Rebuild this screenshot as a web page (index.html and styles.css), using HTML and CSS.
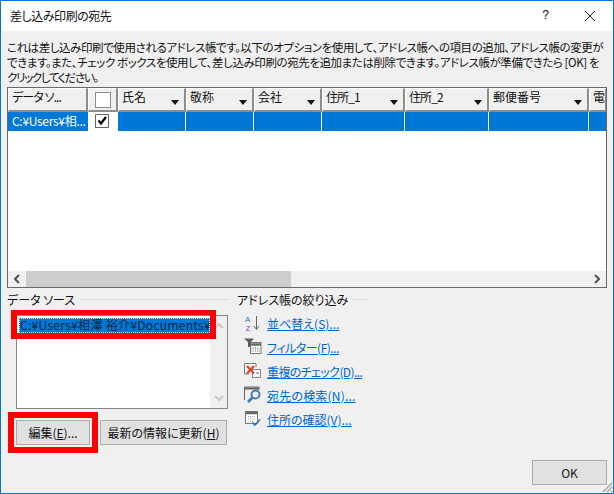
FILE: index.html
```html
<!DOCTYPE html>
<html lang="ja">
<head>
<meta charset="utf-8">
<title>差し込み印刷の宛先</title>
<link rel="stylesheet" href="styles.css">
</head>
<body>
<div class="window">
  <header class="titlebar">
    <span class="title">差し込み印刷の宛先</span>
    <span class="help">?</span>
    <svg class="close" width="12" height="12" viewBox="0 0 12 12"><path d="M1 1L11 11M11 1L1 11" stroke="#222" stroke-width="1" fill="none"/></svg>
  </header>
  <main class="content">
    <p class="intro"><span class="l1">これは差し込み印刷で使用されるアドレス帳です。以下のオプションを使用して、アドレス帳への項目の追加、アドレス帳の変更が</span><span class="l2">できます。また、チェック ボックスを使用して、差し込み印刷の宛先を追加または削除できます。アドレス帳が準備できたら [OK] を</span><span class="l3">クリックしてください。</span></p>
    <section class="table">
      <div class="row head">
        <div class="th tight">データ ソ...</div>
        <div class="th center"><span class="box"></span></div>
        <div class="th arrow">氏名</div>
        <div class="th arrow">敬称</div>
        <div class="th arrow">会社</div>
        <div class="th arrow tight">住所_1</div>
        <div class="th arrow tight">住所_2</div>
        <div class="th arrow">郵便番号</div>
        <div class="th">電</div>
      </div>
      <div class="row sel">
        <div class="td">C:¥Users¥相...</div>
        <div class="td check"><span class="box small"><svg width="11" height="11" viewBox="0 0 11 11"><path d="M1.500 4.500L4 7.500L9 1" stroke="#000" stroke-width="2.200" fill="none"/></svg></span></div>
        <div class="td line"></div><div class="td line"></div><div class="td line"></div><div class="td line"></div><div class="td line"></div><div class="td line"></div><div class="td line"></div>
      </div>
      <div class="table-space"></div>
      <div class="hscroll">
        <svg class="sarrow" width="6" height="10" viewBox="0 0 6 10"><path d="M5 1L1 5L5 9" stroke="#555" stroke-width="2" fill="none"/></svg>
        <div class="track"><div class="thumb"></div></div>
        <svg class="sarrow" width="6" height="10" viewBox="0 0 6 10"><path d="M1 1L5 5L1 9" stroke="#555" stroke-width="2" fill="none"/></svg>
      </div>
    </section>
    <section class="lower">
      <div class="source">
        <div class="group-title"><span>データ ソース</span><i></i></div>
        <div class="listbox">
          <div class="items"><div class="item"><span>C:¥Users¥相澤 裕介¥Documents¥</span></div></div>
          <div class="vscroll">
            <svg width="10" height="6" viewBox="0 0 10 6"><path d="M1 5L5 1L9 5" stroke="#c8c8c8" stroke-width="2" fill="none"/></svg>
            <svg width="10" height="6" viewBox="0 0 10 6"><path d="M1 1L5 5L9 1" stroke="#c8c8c8" stroke-width="2" fill="none"/></svg>
          </div>
          <div class="mark mark-list"></div>
        </div>
        <div class="buttons">
          <button class="btn edit">編集(<u>E</u>)...<span class="mark mark-edit"></span></button>
          <button class="btn refresh">最新の情報に更新(<u>H</u>)</button>
        </div>
      </div>
      <div class="filter">
        <div class="group-title"><span>アドレス帳の絞り込み</span><i></i></div>
        <ul class="links">
          <li><svg width="18" height="18" viewBox="0 0 18 18"><text x="1" y="8" class="az a">A</text><text x="1.500" y="17" class="az z">Z</text><path d="M12.500 2V15M10 12L12.500 15.500L15 12" stroke="#666" fill="none"/></svg><a>並べ替え(S)...</a></li>
          <li><svg width="18" height="18" viewBox="0 0 18 18"><path d="M0 0.500H10L7 4V9H4V4Z" fill="#5c5c5c"/><rect x="6.500" y="4.500" width="10.500" height="11" fill="#fff" stroke="#777"/><path d="M7 6.500H17" stroke="#666" stroke-width="2.500"/><path d="M9 9V15M11.500 9V15M14 9V15M7 10.500H17M7 13H17" stroke="#aaa" stroke-dasharray="1 1"/></svg><a class="t1">フィルター(F)...</a></li>
          <li><svg width="18" height="18" viewBox="0 0 18 18"><path d="M0.500 1.500H12V5M0.500 1.500V12H5" stroke="#777" fill="#fff"/><rect x="8.500" y="7.500" width="8" height="8" fill="#fff" stroke="#888"/><path d="M12 11H15" stroke="#555"/><path d="M3 4L10 11.500M10 4L3 11.500" stroke="#d8482c" stroke-width="2.200" fill="none"/></svg><a class="t2">重複のチェック(D)...</a></li>
          <li><svg width="18" height="18" viewBox="0 0 18 18"><path d="M0.500 14V1H15V4" stroke="#666" fill="none"/><path d="M1 2.500H15" stroke="#666" stroke-width="2"/><circle cx="11.500" cy="8.500" r="4" fill="#e6f0f8" stroke="#3c78ae" stroke-width="1.800"/><path d="M8.500 11.500L4 16" stroke="#3c78ae" stroke-width="2.600"/></svg><a class="t3">宛先の検索(N)...</a></li>
          <li><svg width="18" height="18" viewBox="0 0 18 18"><rect x="1.500" y="1.500" width="12" height="12" fill="#fff" stroke="#777"/><path d="M2 3H13" stroke="#666" stroke-width="2.500"/><path d="M4 6.500H12M4 9H12M4 11.500H9" stroke="#aaa" stroke-dasharray="1 1"/><path d="M8.500 12.500L11 15L16 9.500" stroke="#3c78ae" stroke-width="1.800" fill="none"/></svg><a>住所の確認(V)...</a></li>
        </ul>
      </div>
    </section>
    <footer class="footer">
      <button class="btn ok">OK</button>
    </footer>
    <svg class="grip" width="12" height="12" viewBox="0 0 12 12"><path d="M11 2L2 11M11 6L6 11M11 10L10 11" stroke="#a0a0a0" stroke-width="1.200"/></svg>
  </main>
</div>
</body>
</html>
```

FILE: styles.css
```css
* { box-sizing: border-box; }
html, body { margin: 0; padding: 0; }
body {
  width: 614px;
  height: 494px;
  overflow: hidden;
  font-family: "Noto Sans CJK JP", "Noto Sans", sans-serif;
  font-size: 12px;
  font-feature-settings: "palt";
  color: #111;
}
.window {
  width: 614px;
  height: 494px;
  border: 1px solid #0078d7;
  display: flex;
  flex-direction: column;
  background: #f0f0f0;
}
.titlebar {
  height: 30px;
  flex: none;
  background: #fff;
  display: flex;
  align-items: center;
  padding-left: 9px;
  padding-bottom: 2px;
}
.title { flex: 1; font-size: 12px; letter-spacing: -0.45px; }
.help { margin-right: 35px; font-size: 12px; font-family: "Liberation Sans", sans-serif; }
.close { margin-right: 17px; margin-top: 2px; }
.content {
  flex: 1;
  position: relative;
  display: flex;
  flex-direction: column;
  padding: 9px 6px 0;
  min-height: 0;
}
.intro {
  margin: 0;
  height: 47px;
  line-height: 15px;
  white-space: nowrap;
  font-size: 11.500px;
}
.intro span { display: block; }
.l1 { letter-spacing: -0.42px; }
.l2 { letter-spacing: -0.42px; }
.l3 { letter-spacing: -1.300px; }
.table {
  width: 600px;
  height: 201px;
  flex: none;
  border: 1px solid #696969;
  background: #fff;
  display: flex;
  flex-direction: column;
  overflow: hidden;
}
.row {
  display: grid;
  grid-template-columns: 80px 30px 68px 68px 68px 83px 84px 100px 18px;
  flex: none;
}
.head { height: 24px; background: #f0f0f0; }
.th {
  position: relative;
  border: 1px solid #fff;
  border-right: 2px solid #8c8c8c;
  border-bottom: 2px solid #8c8c8c;
  padding: 0 0 0 3px;
  line-height: 15px;
  overflow: hidden;
  white-space: nowrap;
}
.th.tight { letter-spacing: -0.9px; }
.th.center { display: flex; align-items: center; justify-content: center; padding: 0; }
.th.arrow::after {
  content: "";
  position: absolute;
  right: 5px;
  top: 11px;
  border: 4px solid transparent;
  border-top: 5px solid #111;
  border-bottom: 0;
}
.box {
  display: block;
  width: 16px;
  height: 16px;
  background: #fff;
  border: 1px solid #8c8c8c;
}
.sel { height: 19px; background: #0078d7; color: #fff; }
.td { line-height: 18px; padding-left: 4px; white-space: nowrap; overflow: hidden; font-size: 12px; letter-spacing: -0.3px; }
.td.line { border-right: 1px solid #fff; }
.td.check { background: #fff; display: flex; justify-content: center; padding: 1px 2px 0 0; }
.box.small {
  width: 14px;
  height: 14px;
  margin-top: 1px;
  border-color: #666;
  display: flex;
  align-items: center;
  justify-content: center;
}
.table-space { flex: 1; }
.hscroll {
  height: 16px;
  flex: none;
  background: #f0f0f0;
  display: flex;
  align-items: center;
}
.sarrow { flex: none; margin: 0 6px; }
.track { flex: 1; height: 16px; }
.thumb { width: 265px; height: 16px; background: #cdcdcd; }
.lower { display: flex; margin-top: 4px; flex: none; }
.source { width: 222px; margin-right: 8px; position: relative; }
.group-title { display: flex; align-items: center; height: 15px; line-height: 15px; }
.group-title span { white-space: nowrap; }
.group-title i { flex: 1; height: 1px; background: #dcdcdc; margin-left: 5px; }
.listbox {
  position: relative;
  margin: 8px 0 0 9px;
  width: 212px;
  height: 94px;
  border: 1px solid #828790;
  background: #fff;
  display: flex;
}
.items { flex: 1; padding: 2px 0 0 2px; min-width: 0; }
.item {
  background: #0078d7;
  color: #08233f;
  height: 15px;
  line-height: 14px;
  white-space: nowrap;
  overflow: hidden;
  outline: 1px dotted #e0e0e0;
  outline-offset: -1px;
  padding-left: 1px;
  letter-spacing: 0.3px;
}
.vscroll {
  width: 17px;
  flex: none;
  background: #f0f0f0;
  display: flex;
  flex-direction: column;
  justify-content: space-between;
  align-items: center;
  padding: 7px 0 7px;
}
.mark { position: absolute; border: 6px solid #ff0000; pointer-events: none; }
.mark-list { left: -6px; top: -6px; width: 205px; height: 29px; border-width: 5px 6px 6px 6px; }
.buttons { display: flex; gap: 10px; margin: 11px 0 0 9px; }
.btn {
  font: inherit;
  font-feature-settings: inherit;
  height: 25px;
  background: #e1e1e1;
  border: 1px solid #adadad;
  color: #111;
  padding: 0;
  white-space: nowrap;
}
.edit { width: 74px; position: relative; }
.refresh { width: 127px; }
.mark-edit { left: -9px; top: -9px; width: 90px; height: 41px; border-width: 6px; }
.filter { width: 130px; }
.links { list-style: none; margin: 7px 0 0 7px; padding: 0; display: flex; flex-direction: column; gap: 6px; }
.links li { display: flex; align-items: center; height: 18px; gap: 5px; white-space: nowrap; }
.links svg { flex: none; }
.links a { color: #0066cc; text-decoration: underline; font-size: 12px; }
.links a.t1 { letter-spacing: -0.5px; }
.links a.t2 { letter-spacing: -0.6px; }
.links a.t3 { letter-spacing: 0.2px; }
.az { font: 8px "Liberation Sans", sans-serif; }
.az.a { fill: #3f74b0; }
.az.z { fill: #7a4ea0; }
.footer { position: absolute; right: 6px; bottom: 8px; }
.ok { width: 75px; display: block; }
.grip { position: absolute; right: 0; bottom: 0; }
```
